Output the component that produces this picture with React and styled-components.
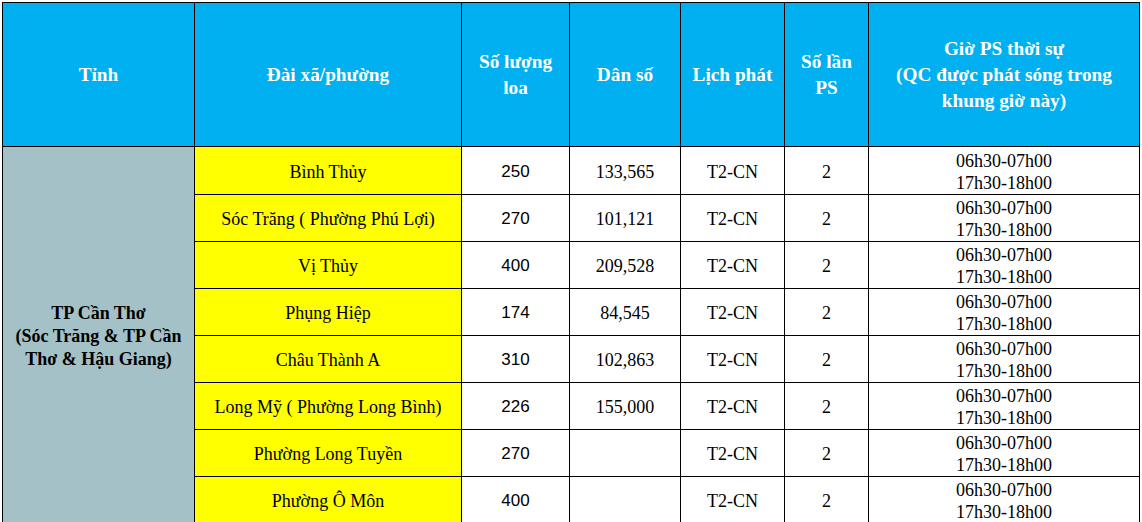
import React from 'react';
import styled, { createGlobalStyle } from 'styled-components';

const GlobalStyle = createGlobalStyle`
  html, body {
    margin: 0;
    padding: 0;
    background: #fff;
  }
`;

const rows = [
  { name: 'Bình Thủy', loa: '250', pop: '133,565' },
  { name: 'Sóc Trăng ( Phường Phú Lợi)', loa: '270', pop: '101,121' },
  { name: 'Vị Thủy', loa: '400', pop: '209,528' },
  { name: 'Phụng Hiệp', loa: '174', pop: '84,545' },
  { name: 'Châu Thành A', loa: '310', pop: '102,863' },
  { name: 'Long Mỹ ( Phường Long Bình)', loa: '226', pop: '155,000' },
  { name: 'Phường Long Tuyền', loa: '270', pop: '' },
  { name: 'Phường Ô Môn', loa: '400', pop: '' },
];

const Sheet = styled.div`
  padding: 2px 0 0 2px;
  height: 522px;
  overflow: hidden;
  box-sizing: border-box;
`;

const Table = styled.table`
  border-collapse: collapse;
  table-layout: fixed;
  width: 1138px;
  font-family: "Liberation Serif", "Times New Roman", serif;
  color: #000;

  tbody tr:first-child td {
    height: 44px;
    padding-top: 3px;
  }
`;

const Head = styled.th`
  background: #00b0f0;
  color: #fff;
  font-weight: bold;
  font-size: 19.3px;
  line-height: 26px;
  height: 143px;
  padding: 0 2px;
  border: 1px solid #000;
  text-align: center;
  vertical-align: middle;
`;

const Cell = styled.td`
  height: 44px;
  padding: 2px 0 0;
  border: 1px solid #000;
  text-align: center;
  vertical-align: middle;
  line-height: 22px;
  white-space: nowrap;
  background: ${(p) => p.$bg || '#fff'};
  font-family: ${(p) =>
    p.$sans ? '"Liberation Sans", Arial, sans-serif' : '"Liberation Serif", "Times New Roman", serif'};
  font-size: ${(p) => (p.$sans ? '17px' : '18px')};
`;

const Province = styled.td`
  background: #a3c1c6;
  border: 1px solid #000;
  padding: 0 2px;
  text-align: center;
  vertical-align: middle;
  font-weight: bold;
  font-size: 18px;
  line-height: 23px;
`;

export default function App() {
  return (
    <>
      <GlobalStyle />
      <Sheet>
        <Table>
          <colgroup>
            <col style={{ width: 192 }} />
            <col style={{ width: 267 }} />
            <col style={{ width: 108 }} />
            <col style={{ width: 111 }} />
            <col style={{ width: 104 }} />
            <col style={{ width: 84 }} />
            <col style={{ width: 271 }} />
          </colgroup>
          <thead>
            <tr>
              <Head>Tỉnh</Head>
              <Head>Đài xã/phường</Head>
              <Head>Số lượng<br />loa</Head>
              <Head>Dân số</Head>
              <Head>Lịch phát</Head>
              <Head>Số lần<br />PS</Head>
              <Head>
                Giờ PS thời sự<br />(QC được phát sóng trong<br />khung giờ này)
              </Head>
            </tr>
          </thead>
          <tbody>
            {rows.map((r, i) => (
              <tr key={r.name}>
                {i === 0 && (
                  <Province rowSpan={rows.length}>
                    TP Cần Thơ<br />(Sóc Trăng &amp; TP Cần<br />Thơ &amp; Hậu Giang)
                  </Province>
                )}
                <Cell $bg="#ffff00">{r.name}</Cell>
                <Cell $sans>{r.loa}</Cell>
                <Cell>{r.pop}</Cell>
                <Cell>T2-CN</Cell>
                <Cell>2</Cell>
                <Cell>
                  06h30-07h00<br />17h30-18h00
                </Cell>
              </tr>
            ))}
          </tbody>
        </Table>
      </Sheet>
    </>
  );
}
